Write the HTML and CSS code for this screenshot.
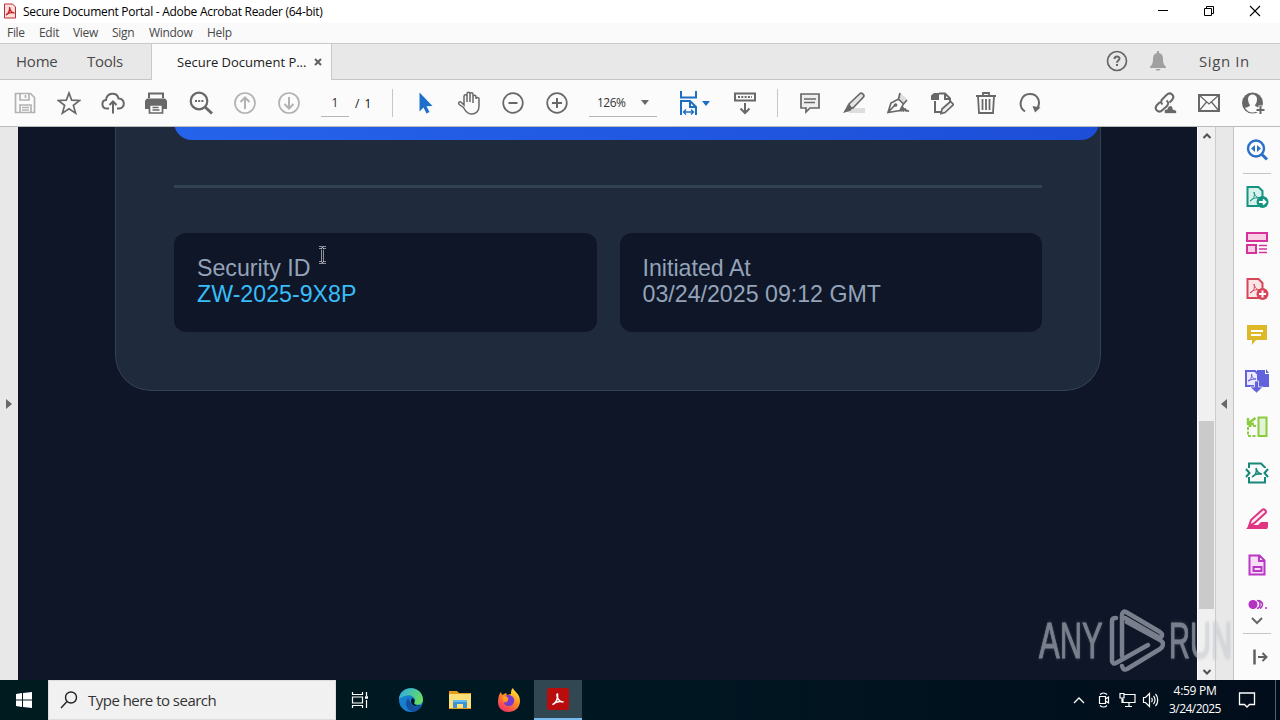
FILE: index.html
```html
<!DOCTYPE html>
<html lang="en">
<head>
<meta charset="utf-8">
<title>Secure Document Portal</title>
<link rel="stylesheet" href="styles.css">
</head>
<body>
<div class="screen">
<header class="titlebar">
  <svg class="app-icon" width="14" height="16" viewBox="0 0 14 16"><path d="M1.500 1h8l3 3v11h-11z" fill="#fbdedd" stroke="#b8312f"/><path d="M3 12C6 10 7 7 6.500 4C7 8 9 10 11.500 10C8 9 5 10 3 12z" fill="none" stroke="#c51d1d" stroke-width="1.300"/></svg>
  <span class="title-text">Secure Document Portal - Adobe Acrobat Reader (64-bit)</span>
  <div class="win-controls">
    <svg width="12" height="12" viewBox="0 0 12 12"><path d="M1 5.500h10" stroke="#000"/></svg>
    <svg width="12" height="12" viewBox="0 0 12 12" fill="none" stroke="#000"><path d="M1.500 3.500h7v7h-7zM3.500 3.500v-2h7v7h-2"/></svg>
    <svg width="12" height="12" viewBox="0 0 12 12"><path d="M1 1l10 10M11 1L1 11" stroke="#000" stroke-width="1.100"/></svg>
  </div>
</header>
<nav class="menubar"><span class="m1">File</span><span class="m2">Edit</span><span class="m3">View</span><span class="m4">Sign</span><span class="m5">Window</span><span class="m6">Help</span></nav>
<div class="tabs">
  <span class="tab-home">Home</span><span class="tab-tools">Tools</span>
  <div class="tab-active"><span class="tab-label">Secure Document P...</span><svg width="8" height="8" viewBox="0 0 8 8"><path d="M1 1l6 6M7 1L1 7" stroke="#606060" stroke-width="2"/></svg></div>
  <div class="account">
    <svg width="22" height="22" viewBox="0 0 22 22" fill="none" stroke="#666" stroke-width="1.700"><circle cx="11" cy="11" r="9.500"/><path d="M8.500 9c0-3.500 5-3.200 5-.4 0 1.900-2.500 1.900-2.500 4.100" stroke-width="2"/><path d="M11 14v2" stroke-width="2"/></svg>
    <svg width="18" height="22" viewBox="0 0 18 22" fill="#a0a0a0"><path d="M8 1h2v2c3 .6 4 3 4 6 0 5 1.500 6 3 8v1H1v-1c1.500-2 3-3 3-8 0-3 1-5.400 4-6zM6.500 19h5c-.5 2-4.500 2-5 0z"/></svg>
    <span class="signin">Sign In</span>
  </div>
</div>
<div class="toolbar">
  <div class="tools">
    <svg class="ic pale" viewBox="0 0 24 24"><path d="M2.500 2.500h15l4 4v15h-19zM7 3v6h9V3M12.500 4v3M7 21v-7h11v7M9 16.500h7M9 19h7"/></svg>
    <svg class="ic" viewBox="0 0 24 24"><path d="M12 2l2.700 7.200 8 .3-6.300 4.900 2.200 7.700L12 17.700 5.400 22.100l2.200-7.700L1.300 9.500l8-.3z"/></svg>
    <svg class="ic" viewBox="0 0 24 24"><path d="M8 17.500H6c-6 0-5.800-8-1-8.500C6 1 16 1 17.500 7.500c7-.2 7 10 .5 10h-2M12 22.500v-12M8.500 14l3.500-3.500 3.500 3.500" stroke-width="2"/></svg>
    <svg class="ic printer" viewBox="0 0 24 24"><path d="M5 7V2.500h14V7" stroke-width="2"/><path d="M3 7.500h18l2 2V18H1V9.500z" fill="#686868" stroke="none"/><path d="M5.500 14h13v8h-13z" fill="#fbfbfb"/><path d="M8.500 16.500h6M8.500 19h7" stroke-width="1.300"/></svg>
    <svg class="ic" viewBox="0 0 24 24"><circle cx="10" cy="10" r="8.300" stroke-width="2.200"/><path d="M16 16l7 6.500" stroke-width="3"/><path d="M6 10h2M9.200 10h2M12.400 10h2" stroke-width="2"/></svg>
    <svg class="ic pale" viewBox="0 0 24 24"><circle cx="12" cy="12" r="10"/><path d="M12 18V6.500M7.500 11L12 6.500l4.500 4.500" stroke-width="2"/></svg>
    <svg class="ic pale" viewBox="0 0 24 24"><circle cx="12" cy="12" r="10"/><path d="M12 6v11.500M7.500 13l4.500 4.500 4.500-4.500" stroke-width="2"/></svg>
  </div>
  <div class="page-box">1</div><span class="page-total">/ 1</span>
  <i class="sep sep1"></i>
  <div class="tools after-sep">
    <svg class="ic" viewBox="0 0 24 24"><path d="M6.500 1.500v19l4-4 3 6 3-1.400-3-5.800 6-.3z" fill="#1c70cb" stroke="none"/></svg>
    <svg class="ic" viewBox="0 0 24 24"><path d="M7 14V5.500c0-2.200 3-2.200 3 0V11V3c0-2.200 3-2.200 3 0v8V3.500c0-2.200 3-2.200 3 0V12V6c0-2.200 3-2.200 3 0v2c0-2 3-2 3 0v7c0 5-3 8-7.500 8-4 0-6-2.500-8-6.500L2.200 13.500c-1.700-2 .7-4 2.800-1.500z" stroke-width="1.500"/></svg>
    <svg class="ic" viewBox="0 0 24 24"><circle cx="12" cy="12" r="9.800"/><path d="M7.500 12h9" stroke-width="2"/></svg>
    <svg class="ic" viewBox="0 0 24 24"><circle cx="12" cy="12" r="9.800"/><path d="M7 12h10M12 7v10" stroke-width="2"/></svg>
  </div>
  <div class="zoom-box"><span>126%</span><i class="caret"></i></div>
  <div class="fit"><svg width="20" height="26" viewBox="0 0 20 26" fill="none" stroke="#1c6fc1" stroke-width="2"><path d="M2 1v6.500h15V1M2 25V11h9l6 6v8M11 11v6h6"/><path d="M5 22h9M7 19.500L4.500 22 7 24.500M12 19.500l2.500 2.500-2.500 2.500" stroke-width="1.400"/></svg><i class="caret blue"></i></div>
  <svg class="ic key" viewBox="0 0 24 24"><path d="M2 2.500h20v7H2zM12 12v10M7.500 17.500l4.500 4.500 4.500-4.500" stroke-width="2"/><path d="M5 6h14" stroke-dasharray="2 1.300" stroke-width="2"/></svg>
  <i class="sep sep2"></i>
  <div class="tools marks">
    <svg class="ic" viewBox="0 0 24 24"><path d="M3 3h18v14h-9l-4 4v-4H3z" fill="#eee"/><path d="M6 8h12M6 11.500h11" stroke-width="1.500"/></svg>
    <svg class="ic" viewBox="0 0 24 24"><path d="M7 17h16v5H7z" fill="#ddd" stroke="none"/><path d="M7 13L17.500 3c2-2 5.500.5 4 3L11 17H8z" fill="#e4e4e4"/><path d="M6 13l5 4-3 3-7 2 3-5z" fill="#686868" stroke="none"/></svg>
    <svg class="ic" viewBox="0 0 24 24"><path d="M14 2l7 6-3 4-6-6z" fill="#ddd" stroke="none"/><path d="M2 21.500L5 12l7.500-4 5 5-3.500 6.500zM2 21.500l6.500-7M14 2l-1.500 6M17.500 13l3.500-4M15 20.500c2-5 3-5 2 0 2-4 3-3 2.500 0 1.500-2 1.500-1 3.500 0"/><circle cx="9.500" cy="14" r="1"/></svg>
    <svg class="ic" viewBox="0 0 24 24"><path d="M9 2.500h6l5 5v4M15 3v5h5M5 10v11h7" stroke-width="2"/><path d="M1 4.500L4 2h5v7H1z" fill="#686868" stroke="none"/><path d="M12 18l8.500-7.500 3 3L15 21.500l-4 1z" fill="#eee"/></svg>
    <svg class="ic" viewBox="0 0 24 24"><path d="M2 5h20M9 5V2h6v3M4 5l1 17h14l1-17M8.500 8v11M12 8v11M15.500 8v11" stroke-width="1.800"/></svg>
    <svg class="ic" viewBox="0 0 24 24"><path d="M7 20.500C-1 15 3 3 12 3c8 0 11 8 7.500 14" stroke-width="2"/><path d="M14.500 15l8 1.500-5.500 5z" fill="#686868" stroke="none"/></svg>
  </div>
  <div class="tools share">
    <svg class="ic" viewBox="0 0 24 24"><path d="M9.500 13.500c-2.200-2-1.500-4 0-5.500l4-4c4-4 9 1 5.500 5l-2.500 2.500M13.500 9.500c2.500 2 2 4 0 6L9.500 19c-4 4-9-1-5.500-5l3-3" stroke-width="2"/><path d="M12 22.500c-2-4 1-5 2-4 1-5 6-5 6 0 4 0 4 3 3 4z" fill="#686868" stroke="#fbfbfb" stroke-width=".7"/></svg>
    <svg class="ic" viewBox="0 0 24 24"><path d="M2 4h20v16H2z" stroke-width="2"/><path d="M2 4l10 9L22 4M2 20l7.500-9M22 20l-7.500-9" stroke-width="1.300"/></svg>
    <svg class="ic" viewBox="0 0 24 24"><circle cx="11.500" cy="12" r="10.500" fill="#686868" stroke="none"/><path d="M7 8c0-6 9-6 9 0 0 3-1 5-2 6 0 2 4 2 5 3-4 6-11 6-15 0 1-1 5-1 5-3C8 13 7 10 7 8z" fill="#fbfbfb" stroke="none"/><path d="M15 19h9M19.500 14.500v9" stroke="#fbfbfb" stroke-width="4"/><path d="M15.500 19h8M19.500 15v8" stroke-width="2"/></svg>
  </div>
</div>
<main class="workspace">
  <div class="left-strip"><i class="tri-right"></i></div>
  <section class="document">
    <div class="card">
      <div class="cta"></div>
      <div class="rule"></div>
      <div class="details">
        <div class="detail">Security ID<br><span class="code">ZW-2025-9X8P</span></div>
        <div class="detail">Initiated At<br>03/24/2025 09:12 GMT</div>
      </div>
    </div>
  </section>
  <div class="scrollbar"><svg width="10" height="8" viewBox="0 0 10 8"><path d="M1.500 6L5 2.500 8.500 6" fill="none" stroke="#505050" stroke-width="2"/></svg><i class="thumb"></i><svg class="down" width="10" height="8" viewBox="0 0 10 8"><path d="M1.500 2L5 5.500 8.500 2" fill="none" stroke="#505050" stroke-width="2"/></svg></div>
  <div class="right-strip"><i class="tri-left"></i></div>
  <aside class="panel">
    <svg class="pi" viewBox="0 0 24 24" fill="none" stroke="#2b70c8" stroke-width="2.400"><circle cx="11" cy="10.500" r="8"/><path d="M17 16.500l5 5" stroke-width="3"/><path d="M10 7v7l-4-3.500zM12 7v7l4-3.500z" fill="#2b70c8" stroke="none"/></svg>
    <i class="prule"></i>
    <div class="plist">
    <svg class="pi" viewBox="0 0 24 24"><path d="M2.500 2h11l4 4v15h-15z" fill="#d8f1ed" stroke="#159482" stroke-width="2"/><path d="M5 16c4-2 5-5 4-9 1 4 3 6 6 6-4-.5-7 0-10 3" fill="none" stroke="#159482"/><circle cx="17.500" cy="17" r="6" fill="#159482"/><path d="M14 17h6M18 14.500l2.500 2.500-2.500 2.500" fill="none" stroke="#fff" stroke-width="1.800"/></svg>
    <svg class="pi" viewBox="0 0 24 24" fill="#f9cfe6" stroke="#d5339b" stroke-width="2"><path d="M2 2h20v8H2zM2 14h9v8H2z"/><path d="M14 14.500h8M14 18h8M14 21.500h8" stroke-width="1.300"/></svg>
    <svg class="pi" viewBox="0 0 24 24"><path d="M2.500 2h11l4 4v15h-15z" fill="#fde4e6" stroke="#d54658" stroke-width="2"/><path d="M5 16c4-2 5-5 4-9 1 4 3 6 6 6-4-.5-7 0-10 3" fill="none" stroke="#d54658"/><circle cx="17.500" cy="17" r="6" fill="#d54658"/><path d="M14 17h7M17.500 13.500v7" stroke="#fff" stroke-width="2"/></svg>
    <svg class="pi" viewBox="0 0 24 24"><path d="M2 2h20v15H11l-4 5v-5H2z" fill="#ddb928"/><path d="M6 8h12M6 12h10" stroke="#fff" stroke-width="2"/></svg>
    <svg class="pi" viewBox="0 0 24 24"><path d="M12 1h8v4h4v13H12z" fill="#6262dc"/><path d="M21 0l3 4h-3z" fill="#6262dc"/><path d="M1 2h9l3 3v12H1z" fill="#ebeaff" stroke="#6262dc" stroke-width="2"/><path d="M3 12c3-1 4-4 3.500-7 .5 4 2 5 4.500 5-3 0-5 .5-8 2" fill="none" stroke="#6262dc"/><path d="M9.500 12h4v6h4.500l-6.500 6L5 18h4.500z" fill="#6262dc" stroke="#fff" stroke-width=".7"/></svg>
    <svg class="pi" viewBox="0 0 24 24" fill="none" stroke="#8bcb3e" stroke-width="2"><path d="M13.500 2.500h8v18.500h-8z" fill="#e4f3d7"/><path d="M11 11H3v10h8" stroke-dasharray="3 1.500"/><path d="M10.500 3L4 8M3 3v6h6" stroke-width="2.500"/></svg>
    <svg class="pi" viewBox="0 0 24 24" fill="none" stroke="#168878" stroke-width="2"><path d="M4 7V2.500h12l4 4V7M4 16v5.500h16V16M1 8l3.500 4L1 16M23 8l-3.500 4 3.500 4"/><path d="M7 16c4-2 5-5 4-9 1 4 3 6 6 6-4-.5-7 0-10 3" stroke-width="1.500"/></svg>
    <svg class="pi" viewBox="0 0 24 24"><path d="M9 18h4l3-3h7v5l-1 2H1l4-4z" fill="#df3583"/><path d="M4 19l2-6L17 3c2-2 5 1 3.500 3L9 16.500z" fill="#ffeaf3" stroke="#df3583" stroke-width="2"/></svg>
    <svg class="pi" viewBox="0 0 24 24" fill="#f6def9" stroke="#b837c3" stroke-width="2"><path d="M4.500 2.500h10l5 5v14h-15zM14 3v5h5M8.500 14h8v4h-8z"/></svg>
    <svg class="pi cut" viewBox="0 0 24 10"><circle cx="8" cy="5.500" r="4.500" fill="#b431c1"/><path d="M12 1.500c4 0 4 7 0 8M14 1.500c5 2 4 6 1 8M20 9h2" fill="none" stroke="#b431c1" stroke-width="1.500"/></svg>
    </div>
    <svg class="pchev" width="14" height="10" viewBox="0 0 14 10"><path d="M2 2l5 5 5-5" fill="none" stroke="#686868" stroke-width="2"/></svg>
    <i class="prule last"></i>
    <svg class="pout" width="16" height="16" viewBox="0 0 16 16" fill="none" stroke="#606060" stroke-width="2"><path d="M2.500 0.500v15" stroke-width="2.500"/><path d="M6 8h8M10.500 4L14.500 8l-4 4"/></svg>
  </aside>
</main>
<footer class="taskbar">
  <div class="start"><svg width="16" height="16" viewBox="0 0 16 16" fill="#fff"><path d="M0 2l6-1v6.500H0zM7 1l9-1v7.500H7zM0 8.500h6V15l-6-1zM7 8.500h9V16l-9-1z"/></svg></div>
  <div class="search"><svg width="18" height="18" viewBox="0 0 18 18" fill="none" stroke="#222" stroke-width="1.400"><circle cx="11" cy="6.500" r="5.500"/><path d="M7 10.500L1 17"/></svg><span>Type here to search</span></div>
  <div class="apps">
    <div><svg class="tasks" width="18" height="16" viewBox="0 0 18 16" fill="none" stroke="#fff" stroke-width="1.200"><path d="M1.500 0v2.500h10V0M1.500 16v-2.500h10V16M1.500 5h10v6h-10zM15.500 0v4M15.500 8v8"/><path d="M14 5.500h3" stroke-width="2.500"/></svg></div>
    <div><svg class="edge" width="26" height="26" viewBox="0 0 26 26"><defs><linearGradient id="edge" x1="0" y1="0" x2="1" y2=".4"><stop stop-color="#2aaaf0"/><stop offset="1" stop-color="#65da64"/></linearGradient></defs><circle cx="13" cy="13" r="12" fill="#1680cf"/><path d="M10 11c-4 5-2 12 5 14 4-1 7-3 9-7-3 2-7 3-10 0z" fill="#1550a0"/><path d="M1 12C2-3 25-2 25 13c0 5-7 6-9 3 4-4-3-10-9-7-3 1-5 2-6 3z" fill="url(#edge)"/><path d="M14 11c-2 3-1 7 3 8 2 .6 5 .2 7-1-3 1-7 1-8-2 1.500-2 0-5-2-5z" fill="#001722"/></svg></div>
    <div><svg width="22" height="20" viewBox="0 0 22 20"><path d="M0 1h8l2 2h12v16H0z" fill="#e69d1d"/><path d="M0 4h22v14H0z" fill="#ffe078"/><path d="M4 10h14v8h-4v-4H8v4H4z" fill="#3995d5"/><path d="M4 10h14v2H4z" fill="#66bbf2"/></svg></div>
    <div><svg width="24" height="25" viewBox="0 0 24 25"><defs><linearGradient id="fox" x1=".8" y1="0" x2=".2" y2="1"><stop stop-color="#fff13b"/><stop offset=".45" stop-color="#ff8c23"/><stop offset="1" stop-color="#f32a6a"/></linearGradient></defs><path d="M4 4l1 3 4-2 1 2 4-1c0-3 0-4 2-6 1 4 7 5 7 13 0 14-22 15-22 1 0-4 1-8 3-10z" fill="url(#fox)"/><path d="M8 8c5-3 12 2 8 8-3 4-9 2-9-2 3 2 4-1 4-2 0-1-3-2-3-4z" fill="#7639d2"/><path d="M5 9c3-2 5-1 6 1 1 2-1 3-2 3l-2 1z" fill="#ff9b26"/></svg></div>
    <div class="current"><svg width="22" height="22" viewBox="0 0 22 22"><rect width="22" height="22" rx="2" fill="#b80d0c"/><path d="M5.500 16.500c3-1 6-6 5-10.500-1.500 0 0 8 6 8-4-1-8 0-11 2.500z" fill="none" stroke="#fff" stroke-width="1.500"/></svg></div>
  </div>
  <div class="tray">
    <svg width="14" height="9" viewBox="0 0 14 9"><path d="M2 7l5-5 5 5" fill="none" stroke="#fff" stroke-width="1.300"/></svg>
    <svg class="t2" width="13" height="16" viewBox="0 0 13 16" fill="none" stroke="#fff" stroke-width="1.200"><path d="M1.500 4.500h6v7h-6zM7.500 7l3-2v6l-3-2M2 2.500c2-2 5-2 7 0M2 13.500c2 2 5 2 7 0"/></svg>
    <svg class="t3" width="17" height="16" viewBox="0 0 17 16" fill="none" stroke="#fff" stroke-width="1.200"><path d="M5 2.500h11v8H4V7M10 10.500v4M6 14.500h7M1 1.500h4V6H1zM3 6v5"/></svg>
    <svg class="t4" width="18" height="16" viewBox="0 0 18 16" fill="none" stroke="#fff" stroke-width="1.200"><path d="M1.500 5.500h2l4-4v13l-4-4h-2zM9.500 6c1 1 1 3 0 4M11.500 4c2 2 2 6 0 8M13.500 2c3 3 3 9 0 12"/></svg>
    <div class="clock"><span class="time">4:59 PM</span><span class="date">3/24/2025</span></div>
    <svg class="note" width="18" height="18" viewBox="0 0 18 18" fill="none" stroke="#fff" stroke-width="1.300"><path d="M1.500 2h15v11.500h-5L9 16l-2.500-2.500h-5z"/></svg>
    <i class="desktop-edge"></i>
  </div>
</footer>
<svg class="pointer" width="9" height="18" viewBox="0 0 9 18" fill="none"><path d="M1 1.500h2.500l1 1 1-1H8M4.500 2.500v13M1 16.500h2.500l1-1 1 1H8" stroke="#b7bac2" stroke-width="2.500"/><path d="M1 1.500h2.500l1 1 1-1H8M4.500 2.500v13M1 16.500h2.500l1-1 1 1H8" stroke="#101522"/></svg>
<div class="watermark"><span class="wm-any">ANY</span><svg width="56" height="64" viewBox="0 0 56 64" fill="none" stroke="#c6cbd4" stroke-width="4.500" stroke-linejoin="round" stroke-linecap="round"><path d="M13 47V6c0-3 2-4 4-3l34 20c4 3 1 7-2 5L16 9M7 9c-3 0-4 1-4 3v40c0 2 2 3 4 2l32-18M13 57c1 4 3 4 5 3l33-20c4-3 4-7 0-9L18 13"/></svg><span class="wm-run">RUN</span></div>
</div>
</body>
</html>
```
FILE: styles.css
```css
*{box-sizing:border-box}
body{margin:0;font-family:"Open Sans","Noto Sans",sans-serif;color:#333}
svg{display:block;flex:none}
i{display:block;flex:none}
.screen{width:1280px;height:720px;overflow:hidden;position:relative;display:flex;flex-direction:column;background:#fbfbfb}
.titlebar{height:23px;background:#fff;display:flex;align-items:center;padding-left:3px;font-size:12px;color:#000;flex:none}
.app-icon{margin-top:-1px}
.title-text{margin-left:6px;white-space:nowrap;letter-spacing:-.28px}
.win-controls{margin-left:auto;display:flex;gap:34px;padding-right:19px;margin-top:-2px}
.menubar{height:20px;flex:none;display:flex;align-items:center;font-size:12px;padding:0 0 2px 7px;color:#484848;background:#fafafa}
.menubar span{white-space:nowrap;letter-spacing:-.3px}
.m1{width:32px}.m2{width:34px}.m3{width:39px}.m4{width:37px}.m5{width:58px}
.tabs{height:37px;flex:none;display:flex;align-items:center;background:#e8e8e8;border-top:1px solid #c9c9c9;border-bottom:1px solid #c5c5c5;font-size:15px;line-height:20px;color:#484848}
.tabs>span{padding-bottom:2px}
.tab-home{width:87px;padding-left:16px;letter-spacing:-.2px}
.tab-tools{width:64px;letter-spacing:-.3px}
.tab-active{width:181px;height:36px;flex:none;align-self:flex-start;background:#fbfbfb;border:solid #c9c9c9;border-width:0 1px;display:flex;align-items:center;padding-left:25px;font-size:13px;color:#222}
.tab-label{width:137px;white-space:nowrap}
.account{margin-left:auto;display:flex;align-items:center;width:174px;padding-bottom:2px}
.account svg+svg{margin-left:21px}
.signin{margin-left:32px;font-size:15px;letter-spacing:.6px;white-space:nowrap}
.toolbar{height:47px;flex:none;border-bottom:1px solid #bbb;display:flex;align-items:center;padding-left:3px;font-size:12px}
.tools{display:flex;gap:20px;padding:0 10px;flex:none}
.ic{width:24px;height:24px;fill:none;stroke:#686868;stroke-width:1.7}
.pale{stroke:#b2b2b2}
.printer{margin:0 1px 0 -1px}
.page-box{width:28px;height:27px;margin-left:10px;border-bottom:1px solid #b7b7b7;text-align:center;line-height:26px}
.page-total{width:23px;margin-left:6px;color:#111;word-spacing:2px}
.sep{width:1px;height:28px;background:#c7c7c7}
.sep1{margin-left:14px}
.after-sep{margin-left:10px}
.zoom-box{width:68px;height:27px;margin-left:10px;border-bottom:1px solid #b7b7b7;display:flex;align-items:center;justify-content:space-between;padding:0 8px;letter-spacing:-.5px}
.caret{border:4px solid transparent;border-top:5px solid #686868;border-bottom:0}
.blue{border-top-color:#1c6fc1}
.fit{display:flex;align-items:center;gap:3px;width:54px;margin-left:22px}
.sep2{margin-left:20px}
.marks{margin-left:10px}
.share{margin-left:90.5px}
.workspace{height:553px;flex:none;display:flex}
.left-strip{width:18px;background:#e8e8e8;display:flex;align-items:center;padding-left:6px}
.tri-right{border:5px solid transparent;border-left:6px solid #686868;border-right:0}
.document{width:1179px;background:#0e1628;padding-left:97px;overflow:hidden}
.card{width:986px;height:287px;margin-top:-23px;background:#1f2a3c;border:1px solid #334155;border-top:0;border-radius:0 0 36px 36px;padding-left:58px}
.cta{width:925px;height:36px;border-radius:0 0 18px 18px;background:linear-gradient(90deg,#2563eb,#1d4ed8)}
.rule{width:868px;height:3px;margin-top:45px;background:#334155}
.details{display:flex;gap:23px;margin-top:45px}
.detail{width:422.5px;height:99px;border-radius:12px;background:#0e1628;color:#94a3b8;padding:22px 23px;font:23.2px/26px "Liberation Sans",Arial,sans-serif;white-space:nowrap}
.code{color:#38bdf8}
.scrollbar{width:18px;background:#f0f0f0;border-left:1px solid #fff;display:flex;flex-direction:column;align-items:center;padding:5px 0 4px 0;flex:none}
.thumb{width:15px;height:188px;background:#cacaca;margin-top:281px}
.down{margin-top:auto}
.right-strip{width:18px;background:#e8e8e8;border-left:1px solid #ccc;display:flex;align-items:center;padding-left:5px;flex:none}
.tri-left{border:5px solid transparent;border-right:6px solid #686868;border-left:0}
.panel{width:47px;border-left:1px solid #c5c5c5;background:#fbfbfb;display:flex;flex-direction:column;align-items:center;padding-top:11px;flex:none}
.pi{width:24px;height:24px}
.prule{width:28px;height:1px;background:#c5c5c5;margin-top:11px}
.plist{display:flex;flex-direction:column;gap:22px;margin-top:11px;height:425px;flex:none}
.cut{height:10px}
.pchev{margin-top:6px}
.last{margin-top:7px}
.pout{margin-top:15px;margin-left:5px}
.taskbar{height:40px;flex:none;display:flex;background:linear-gradient(90deg,#001b20,#001722 50%,#020d1b);color:#fff}
.start{width:48px;display:flex;align-items:center;justify-content:center}
.search{width:288px;background:#f1f1f1;border:1px solid #ddd;display:flex;align-items:center;padding-left:11px;gap:10px;color:#333;font-size:15px}
.search span{letter-spacing:-.52px;white-space:nowrap}
.apps{display:flex}
.apps>div{width:49.5px;height:40px;display:flex;justify-content:center;align-items:center}
.tasks{margin-right:2px}
.edge{margin-left:2px}
.apps>.current{width:48px;background:#314751;border-bottom:2px solid #76b9ed}
.tray{margin-left:auto;display:flex;align-items:center;width:208px}
.t2{margin-left:12px}.t3{margin-left:8px}.t4{margin-left:6px}
.clock{width:54px;margin-left:8px;font-size:12px;line-height:18px;text-align:center}
.clock span{display:block;white-space:nowrap}
.time{letter-spacing:-.3px}.date{letter-spacing:-.55px}
.note{margin-left:16px}
.desktop-edge{width:1px;height:40px;background:#53616c;margin-left:19px}
.pointer{position:absolute;left:318px;top:246px}
.watermark{position:absolute;left:1039px;top:609px;width:195px;height:64px;opacity:.58;color:#c6cbd4;font-family:"Liberation Sans",sans-serif;font-size:50px;line-height:64px}
.watermark svg{position:absolute;left:70px;top:0}
.wm-any,.wm-run{position:absolute;top:0;left:0;transform:scaleX(.62);transform-origin:0 50%;-webkit-text-stroke:1px #c6cbd4;filter:drop-shadow(0 0 2px #8888)}
.wm-run{left:130px;transform:scaleX(.58)}
```
